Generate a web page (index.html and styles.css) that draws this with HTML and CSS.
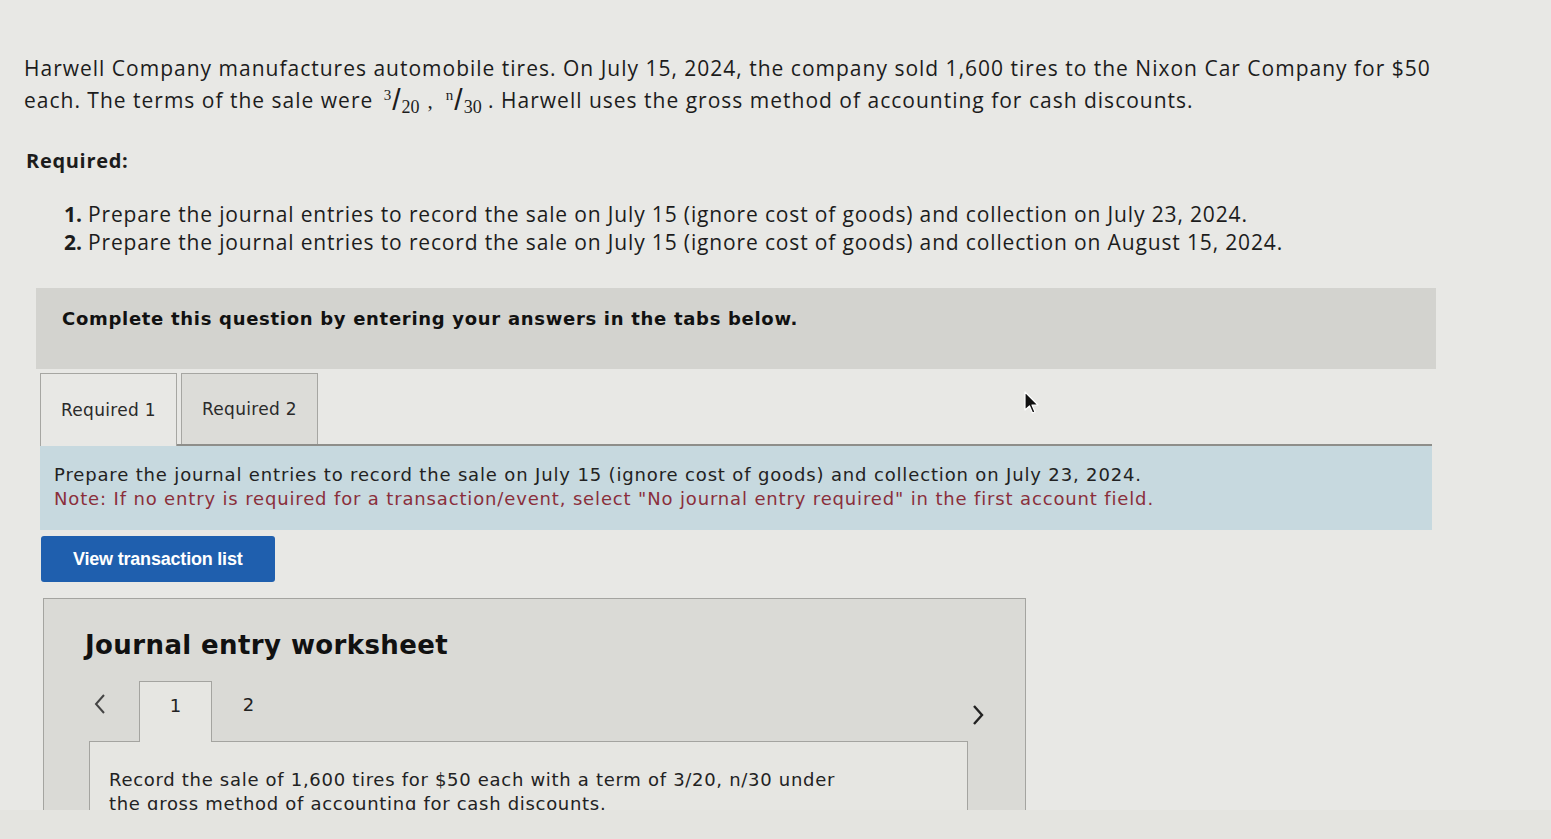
FILE: index.html
```html
<!DOCTYPE html>
<html lang="en">
<head>
<meta charset="utf-8">
<title>Journal entry question</title>
<link rel="stylesheet" href="styles.css">
</head>
<body>
<div class="page">
  <p class="intro">Harwell Company manufactures automobile tires. On July 15, 2024, the company sold 1,600 tires to the Nixon Car Company for $50<br>each. The terms of the sale were <span class="frac"><span class="num">3</span><span class="slash">/</span><span class="den">20</span></span><span class="comma">,</span><span class="frac"><span class="num">n</span><span class="slash">/</span><span class="den">30</span></span> . Harwell uses the gross method of accounting for cash discounts.</p>

  <p class="req-head">Required:</p>

  <ol class="reqs">
    <li><span class="n">1.</span><span>Prepare the journal entries to record the sale on July 15 (ignore cost of goods) and collection on July 23, 2024.</span></li>
    <li><span class="n">2.</span><span>Prepare the journal entries to record the sale on July 15 (ignore cost of goods) and collection on August 15, 2024.</span></li>
  </ol>

  <div class="banner">Complete this question by entering your answers in the tabs below.</div>

  <div class="tabs">
    <div class="tab active">Required 1</div>
    <div class="tab">Required 2</div>
  </div>

  <div class="note">
    <div>Prepare the journal entries to record the sale on July 15 (ignore cost of goods) and collection on July 23, 2024.</div>
    <div class="red">Note: If no entry is required for a transaction/event, select "No journal entry required" in the first account field.</div>
  </div>

  <button class="btn">View transaction list</button>

  <div class="worksheet">
    <h2 class="ws-title">Journal entry worksheet</h2>
    <div class="ws-nav">
      <span class="chev left"><svg width="14" height="22" viewBox="0 0 14 22"><path d="M11 2 L3 11 L11 20" fill="none" stroke="#444" stroke-width="2"/></svg></span>
      <div class="ws-tab active">1</div>
      <div class="ws-tab">2</div>
      <span class="spacer"></span>
      <span class="chev right"><svg width="14" height="22" viewBox="0 0 14 22"><path d="M3 2 L11 11 L3 20" fill="none" stroke="#222" stroke-width="2.4"/></svg></span>
    </div>
    <div class="ws-panel">
      <p>Record the sale of 1,600 tires for $50 each with a term of 3/20, n/30 under<br>the gross method of accounting for cash discounts.</p>
    </div>
  </div>

  <svg class="cursor" width="16" height="26" viewBox="0 0 16 26"><path d="M1 1 L1 19 L5.5 15 L8.5 22 L11 21 L8 14 L14 14 Z" fill="#111" stroke="#fff" stroke-width="1.2" stroke-linejoin="round"/></svg>
</div>
</body>
</html>
```
FILE: styles.css
```css
html, body {
  margin: 0;
  padding: 0;
  background: #e4e4e0;
}
.page {
  position: relative;
  height: 810px;
  overflow: hidden;
  background: #e8e8e5;
  padding: 52px 0 0 24px;
  box-sizing: border-box;
  color: #1c1c1c;
}
.intro {
  margin: 0;
  font-family: "Open Sans", Lato, sans-serif;
  font-size: 21px;
  letter-spacing: 1px;
  line-height: 32px;
}
.frac {
  font-family: "Liberation Serif", serif;
  white-space: nowrap;
  letter-spacing: 0;
  line-height: 0;
  margin-left: 4px;
}
.frac span {
  line-height: 0;
}
.frac .num {
  font-size: 15px;
  vertical-align: 8px;
}
.frac .slash {
  font-size: 30px;
  font-family: "Liberation Sans", sans-serif;
  font-weight: 300;
  margin: 0 1px;
  vertical-align: -2px;
}
.frac .den {
  font-size: 18px;
  vertical-align: -5px;
}
.comma {
  font-family: "Liberation Serif", serif;
  margin: 0 8px 0 8px;
}
.req-head {
  margin: 28px 0 0 2px;
  font-family: "Open Sans", Lato, sans-serif;
  font-weight: 700;
  font-size: 20px;
  letter-spacing: 0.7px;
  line-height: 32px;
}
.reqs {
  list-style: none;
  margin: 23px 0 0 40px;
  padding: 0;
  font-family: "Open Sans", Lato, sans-serif;
  font-size: 21px;
  letter-spacing: 0.85px;
  line-height: 28px;
}
.reqs li {
  display: flex;
}
.reqs .n {
  font-weight: 700;
  width: 24px;
  letter-spacing: 0;
}
.banner {
  margin: 32px 0 0 12px;
  width: 1400px;
  height: 81px;
  box-sizing: border-box;
  padding: 17px 26px;
  background: #d3d3cf;
  font-family: "DejaVu Sans", Verdana, sans-serif;
  font-weight: 700;
  font-size: 18px;
  letter-spacing: 0.7px;
  line-height: 28px;
  color: #111;
}
.tabs {
  display: flex;
  gap: 4px;
  margin: 4px 0 0 16px;
  width: 1392px;
  border-bottom: 2px solid #8e8e8a;
}
.tab {
  height: 71px;
  width: 137px;
  box-sizing: border-box;
  padding: 0 20px;
  display: flex;
  align-items: center;
  border: 1px solid #a6a6a2;
  border-bottom: none;
  background: #dcdcd8;
  font-family: "DejaVu Sans", Verdana, sans-serif;
  font-size: 17px;
  letter-spacing: 0.3px;
  color: #2a2a2a;
}
.tab.active {
  background: #e8e8e5;
  margin-bottom: -2px;
  height: 73px;
}
.note {
  margin: 0 0 0 16px;
  width: 1392px;
  height: 84px;
  box-sizing: border-box;
  padding: 17px 14px 0;
  background: #c7d9df;
  font-family: "DejaVu Sans", Verdana, sans-serif;
  font-size: 18px;
  letter-spacing: 0.85px;
  line-height: 24px;
  color: #222;
}
.note .red {
  color: #8a2f3b;
}
.btn {
  display: block;
  margin: 6px 0 0 17px;
  width: 234px;
  height: 46px;
  border: none;
  border-radius: 3px;
  background: #1f5fae;
  color: #fff;
  font-family: "Liberation Sans", Arial, sans-serif;
  font-weight: 700;
  font-size: 18px;
  letter-spacing: -0.2px;
  text-align: left;
  padding: 0 0 0 32px;
}
.worksheet {
  margin: 16px 0 0 19px;
  width: 983px;
  height: 260px;
  box-sizing: border-box;
  border: 1px solid #a4a4a0;
  background: #dadad6;
  padding: 28px 0 0 41px;
}
.ws-title {
  margin: 0;
  font-family: "DejaVu Sans", Verdana, sans-serif;
  font-weight: 700;
  font-size: 26px;
  letter-spacing: 0.4px;
  line-height: 36px;
  color: #111;
}
.ws-nav {
  display: flex;
  align-items: stretch;
  margin-top: 18px;
  height: 60px;
  width: 900px;
}
.chev {
  display: flex;
  align-items: center;
}
.chev.left {
  margin-left: 8px;
  width: 46px;
  padding-bottom: 14px;
}
.ws-tab {
  width: 73px;
  display: flex;
  align-items: center;
  justify-content: center;
  padding-bottom: 14px;
  box-sizing: border-box;
  font-family: "DejaVu Sans", Verdana, sans-serif;
  font-size: 18px;
  color: #222;
}
.ws-tab.active {
  background: #e6e6e2;
  border: 1px solid #a4a4a0;
  border-bottom: none;
  height: 61px;
}
.spacer {
  flex: 1;
}
.chev.right {
  padding-top: 8px;
}
.ws-panel {
  margin-left: 4px;
  width: 879px;
  height: 100px;
  box-sizing: border-box;
  border: 1px solid #a4a4a0;
  border-bottom: none;
  background: #e6e6e2;
  padding: 26px 0 0 19px;
}
.ws-panel p {
  margin: 0;
  font-family: "DejaVu Sans", Verdana, sans-serif;
  font-size: 18px;
  letter-spacing: 0.7px;
  line-height: 24px;
  color: #222;
}
.cursor {
  position: absolute;
  left: 1024px;
  top: 391px;
}
```
